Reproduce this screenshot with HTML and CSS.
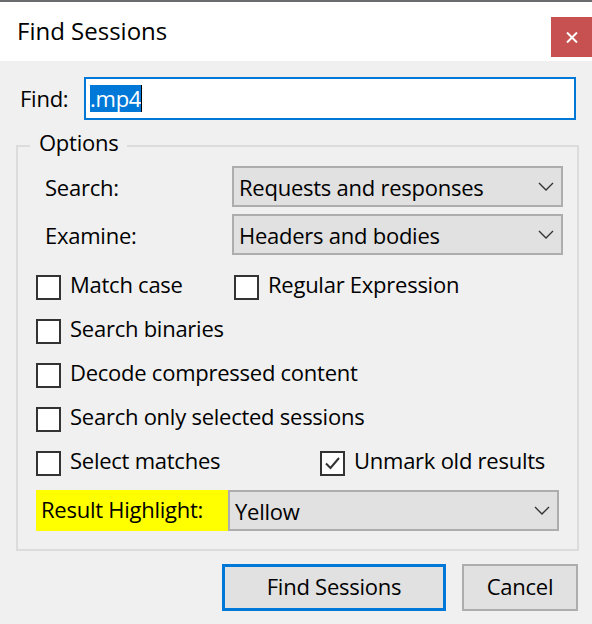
FILE: index.html
```html
<!DOCTYPE html>
<html lang="en">
<head>
<meta charset="utf-8">
<title>Find Sessions</title>
<link rel="stylesheet" href="styles.css">
</head>
<body>
<div class="window">
  <div class="topline"></div>
  <header class="titlebar">
    <h1 class="title">Find Sessions</h1>
    <button class="close" aria-label="Close">
      <svg width="12" height="11" viewBox="0 0 12 11"><path d="M1 0.5 L11 10.5 M11 0.5 L1 10.5" stroke="#fff" stroke-width="2" fill="none"/></svg>
    </button>
  </header>
  <main class="content">
    <div class="find-row">
      <span class="find-label">Find:</span>
      <div class="input"><span class="sel">.mp4</span><span class="caret"></span></div>
    </div>

    <section class="group">
      <span class="legend">Options</span>

      <div class="field-row">
        <span class="field-label">Search:</span>
        <div class="select">
          <span class="select-text">Requests and responses</span>
          <svg class="chev" width="16" height="9" viewBox="0 0 16 9"><path d="M1 1 L8 8 L15 1" stroke="#333" stroke-width="1.4" fill="none"/></svg>
        </div>
      </div>
      <div class="field-row second">
        <span class="field-label">Examine:</span>
        <div class="select">
          <span class="select-text">Headers and bodies</span>
          <svg class="chev" width="16" height="9" viewBox="0 0 16 9"><path d="M1 1 L8 8 L15 1" stroke="#333" stroke-width="1.4" fill="none"/></svg>
        </div>
      </div>

      <div class="checks">
        <div class="check-row pair-a">
          <label class="check"><span class="box"></span><span class="check-text">Match case</span></label>
          <label class="check"><span class="box"></span><span class="check-text">Regular Expression</span></label>
        </div>
        <div class="check-row">
          <label class="check"><span class="box"></span><span class="check-text">Search binaries</span></label>
        </div>
        <div class="check-row">
          <label class="check"><span class="box"></span><span class="check-text">Decode compressed content</span></label>
        </div>
        <div class="check-row">
          <label class="check"><span class="box"></span><span class="check-text">Search only selected sessions</span></label>
        </div>
        <div class="check-row pair-b">
          <label class="check"><span class="box"></span><span class="check-text">Select matches</span></label>
          <label class="check"><span class="box"><svg width="21" height="21" viewBox="0 0 21 21"><path d="M4 10.5 L8.5 15 L17 5" stroke="#333" stroke-width="2" fill="none"/></svg></span><span class="check-text">Unmark old results</span></label>
        </div>
      </div>

      <div class="result-row">
        <span class="hl">Result Highlight:</span>
        <div class="select">
          <span class="select-text">Yellow</span>
          <svg class="chev" width="16" height="9" viewBox="0 0 16 9"><path d="M1 1 L8 8 L15 1" stroke="#333" stroke-width="1.4" fill="none"/></svg>
        </div>
      </div>
    </section>

    <div class="buttons">
      <button class="btn btn-default">Find Sessions</button>
      <button class="btn btn-cancel">Cancel</button>
    </div>
  </main>
</div>
</body>
</html>
```

FILE: styles.css
```css
* { box-sizing: border-box; }

html, body {
  margin: 0;
  padding: 0;
}

body {
  width: 592px;
  height: 624px;
  overflow: hidden;
  background: #f0f0f0;
  font-family: "Open Sans", "Noto Sans", sans-serif;
  font-size: 22px;
  letter-spacing: -0.25px;
  color: #000;
}

.window {
  width: 592px;
  height: 624px;
  display: flex;
  flex-direction: column;
}

.topline {
  height: 2px;
  background: #6b6c6e;
}

.titlebar {
  height: 59px;
  background: #fff;
  display: flex;
  align-items: center;
  padding-left: 17px;
}

.title {
  margin: 0;
  font-weight: 400;
  font-size: 24px;
  letter-spacing: 0;
  line-height: 32px;
  margin-top: -1px;
}

.close {
  margin-left: auto;
  align-self: flex-start;
  margin-top: 15px;
  width: 41px;
  height: 40px;
  border: 0;
  padding: 0;
  background: #c75050;
  display: flex;
  align-items: center;
  justify-content: center;
}

.content {
  display: flex;
  flex-direction: column;
}

.find-row {
  margin-top: 16px;
  padding-left: 20px;
  display: flex;
  align-items: center;
  height: 43px;
}

.find-label {
  width: 64px;
  padding-bottom: 2px;
}

.input {
  width: 492px;
  height: 43px;
  border: 2px solid #0078d7;
  background: #fff;
  padding-left: 4px;
  display: flex;
  align-items: center;
}

.sel {
  background: #0078d7;
  color: #fff;
  line-height: 27px;
  height: 27px;
}

.caret {
  width: 1px;
  height: 27px;
  background: #000;
}

.group {
  position: relative;
  margin-top: 25px;
  margin-left: 16px;
  width: 563px;
  height: 406px;
  border: 2px solid #dcdcdc;
  padding-top: 19px;
}

.legend {
  position: absolute;
  left: 12px;
  top: -20px;
  padding: 0 9px;
  line-height: 30px;
  background: #f0f0f0;
}

.field-row {
  display: flex;
  align-items: center;
  padding-left: 27px;
  height: 41px;
}

.field-row.second {
  margin-top: 7px;
}

.field-label {
  width: 187px;
}

.select {
  width: 331px;
  height: 41px;
  border: 2px solid #adadad;
  background: #e1e1e1;
  display: flex;
  align-items: center;
  padding-left: 5px;
  padding-right: 7px;
}

.select-text {
  flex: 1;
}

.chev {
  display: block;
}

.checks {
  margin-top: 10px;
  padding-left: 18px;
}

.check-row {
  height: 44px;
  display: flex;
  align-items: center;
}

.check {
  display: flex;
  align-items: center;
  gap: 9px;
}

.pair-a .check:first-child { width: 198px; }
.pair-b .check:first-child { width: 284px; }

.box {
  width: 25px;
  height: 25px;
  border: 2px solid #333;
  background: #fff;
  display: flex;
  align-items: center;
  justify-content: center;
  flex: none;
}

.check-text {
  padding-bottom: 7px;
  line-height: 30px;
}

.result-row {
  margin-top: 5px;
  margin-left: 18px;
  display: flex;
  height: 41px;
}

.hl {
  width: 192px;
  height: 41px;
  background: #ffff00;
  padding-left: 5px;
  display: flex;
  align-items: center;
  padding-bottom: 3px;
}

.buttons {
  margin-top: 13px;
  display: flex;
  justify-content: flex-end;
  gap: 16px;
  padding-right: 14px;
}

.btn {
  height: 47px;
  background: #e1e1e1;
  font-family: inherit;
  font-size: 22px;
  letter-spacing: -0.25px;
  color: #000;
  padding: 0 0 3px 0;
}

.btn-default {
  width: 224px;
  border: 3px solid #0078d7;
}

.btn-cancel {
  width: 116px;
  border: 2px solid #adadad;
}
```
